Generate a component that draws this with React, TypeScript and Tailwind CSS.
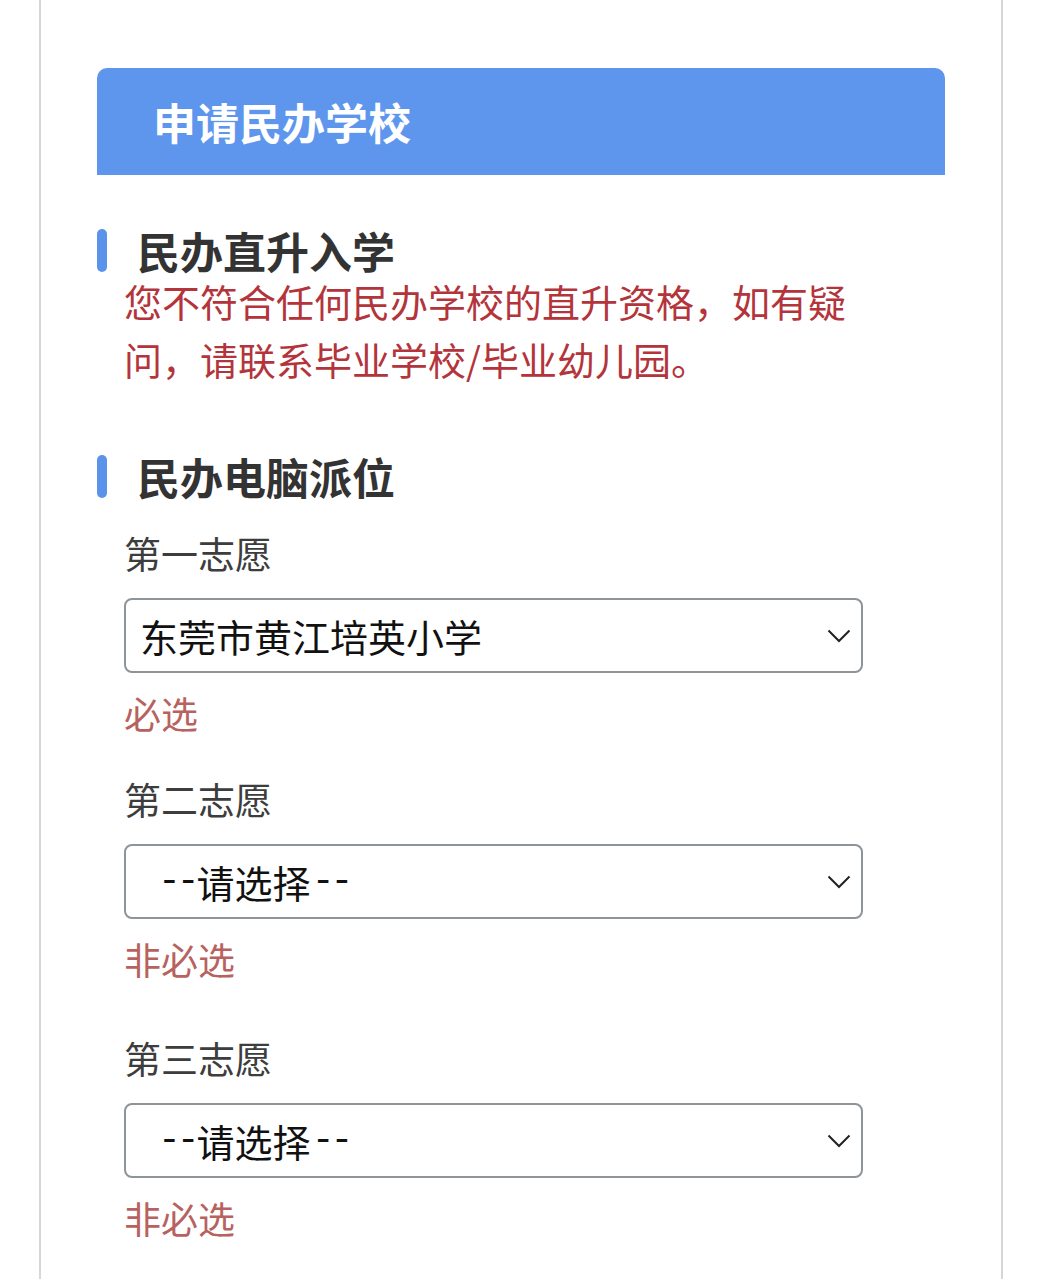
const font = {
  fontFamily: '"Noto Sans CJK SC", "Noto Sans", sans-serif',
};

function SectionTitle({ children }: { children: React.ReactNode }) {
  return (
    <div className="flex h-[44px] items-center gap-[30px]">
      <span className="h-[43px] w-[10px] rounded-full bg-[#5b93ea]" />
      <h2 className="text-[43px] leading-[44px] font-bold text-[#333]">
        {children}
      </h2>
    </div>
  );
}

function Dashes() {
  return (
    <span className="tracking-[-4px]" style={{ fontFamily: '"Liberation Mono", monospace' }}>
      --
    </span>
  );
}

function Placeholder() {
  return (
    <span className="flex items-center gap-[1px] pl-[18px]">
      <Dashes />
      <span>请选择</span>
      <Dashes />
    </span>
  );
}

function Chevron() {
  return (
    <svg width="24" height="14" viewBox="0 0 24 14" className="text-[#222]">
      <polyline
        points="1.5,1.5 12,12 22.5,1.5"
        fill="none"
        stroke="currentColor"
        strokeWidth="2"
      />
    </svg>
  );
}

type Choice = {
  label: string;
  value?: string;
  hint: string;
  spacing: string;
};

const choices: Choice[] = [
  {
    label: "第一志愿",
    value: "东莞市黄江培英小学",
    hint: "必选",
    spacing: "mb-[40px]",
  },
  { label: "第二志愿", hint: "非必选", spacing: "mb-[53px]" },
  { label: "第三志愿", hint: "非必选", spacing: "" },
];

function ChoiceField({ choice }: { choice: Choice }) {
  return (
    <div className={choice.spacing}>
      <div className="text-[37px] leading-[46px] text-[#3d3d3d]">
        {choice.label}
      </div>
      <div className="mt-[22px] flex h-[75px] w-[739px] items-center justify-between rounded-[8px] border-2 border-[#8f9499] bg-white pr-[10px] pl-[14px] text-[38px] text-[#111]">
        {choice.value ? <span>{choice.value}</span> : <Placeholder />}
        <Chevron />
      </div>
      <div className="mt-[17px] text-[37px] leading-[46px] text-[#b8625f]">
        {choice.hint}
      </div>
    </div>
  );
}

export default function App() {
  return (
    <div className="min-h-screen bg-white" style={font}>
      <div className="ml-[39px] min-h-[1279px] w-[964px] border-x-2 border-[#d6d6d6] pl-[56px]">
        <div className="pt-[68px]">
          <div className="flex h-[107px] w-[848px] items-center rounded-t-[10px] bg-[#5e96ee] pl-[56px]">
            <h1 className="text-[43px] font-bold text-white">申请民办学校</h1>
          </div>
        </div>

        <div className="mt-[53px]">
          <SectionTitle>民办直升入学</SectionTitle>
          <p className="w-[766px] pl-[27px] text-[38px] leading-[58px] text-[#b3353b]">
            您不符合任何民办学校的直升资格，如有疑问，请联系毕业学校/毕业幼儿园。
          </p>
        </div>

        <div className="mt-[66px]">
          <SectionTitle>民办电脑派位</SectionTitle>
          <div className="mt-[32px] pl-[27px]">
            {choices.map((c) => (
              <ChoiceField key={c.label} choice={c} />
            ))}
          </div>
        </div>
      </div>
    </div>
  );
}
